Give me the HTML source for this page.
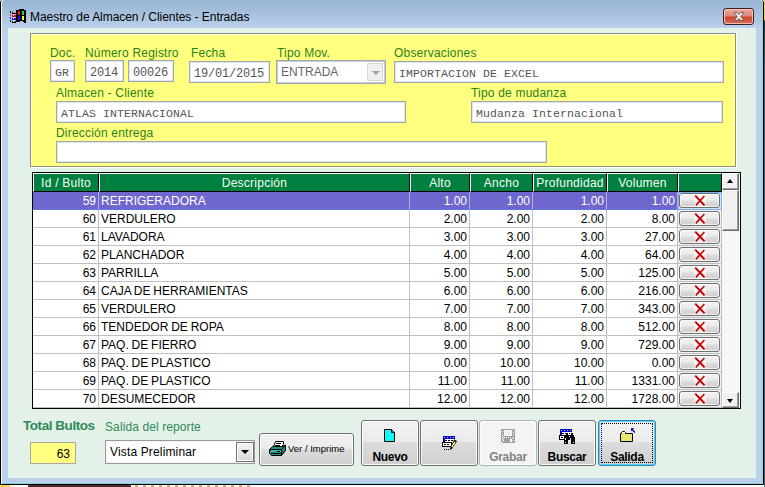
<!DOCTYPE html>
<html>
<head>
<meta charset="utf-8">
<title>Maestro de Almacen / Clientes - Entradas</title>
<style>
*{box-sizing:border-box;margin:0;padding:0}
html,body{width:765px;height:487px;overflow:hidden;background:#fff}
body{position:relative;font-family:"Liberation Sans",sans-serif;font-size:12px;color:#000}
.abs{position:absolute}
#win{left:0;top:-2px;width:764px;height:487px;background:#b9d1ea;border:1px solid #000;border-radius:5px 5px 0 0;overflow:hidden}
#titlebar{left:0;top:1px;width:762px;height:28px;background:linear-gradient(#98b3d1 0%,#a8c2de 50%,#b9d1ea 100%)}
#hl{left:0;top:0;width:762px;height:485px;border:1px solid;border-color:#fff #9fd0e0 #8fcad8 #fff;border-radius:4px 4px 0 0}
#title{left:30px;top:9px;font-size:12px;line-height:16px;white-space:nowrap;color:#000;letter-spacing:-.05px}
#client{left:7px;top:27px;width:748px;height:450px;background:#e4f1e9}
/* yellow panel */
#panel{left:30px;top:33px;width:706px;height:134px;background:#ffff80;border:1px solid #90907c;box-shadow:1px 1px 0 #fff,inset 1px 1px 0 #fffff0}
.lbl{color:#2a8418;font-size:12px;line-height:14px;white-space:nowrap;letter-spacing:.2px}
.inp{background:#fff;border:1px solid #a3a9a6;box-shadow:inset 0 0 0 1px #dde5f5;font-family:"Liberation Mono",monospace;font-size:11.5px;color:#555;white-space:nowrap;overflow:hidden}
.inp span{position:absolute;left:4px;top:5px;line-height:14px;letter-spacing:.1px}
.inp span.n{font-size:12px;letter-spacing:-.2px}
.combo{background:#fff;border:1px solid #a0a8b0;box-shadow:inset 0 0 0 1px #c4cee0}
.combo .ct{position:absolute;left:4px;top:4px;line-height:14px;color:#666;font-size:12px}
.combo .cb{position:absolute;right:2px;top:2px;width:16px;height:18px;background:#efefef;border:1px solid #d8d8d8}
.combo .cb:after{content:"";position:absolute;left:4px;top:7px;border:4px solid transparent;border-top:4px solid #a0a0a0;border-bottom:0}
#close{left:723px;top:8px;width:31px;height:17px;border:1px solid #3c1c28;border-radius:3px;background:linear-gradient(#eaa898 0%,#dc8878 48%,#c8452c 52%,#dc6a58 100%);box-shadow:inset 0 0 0 1px rgba(255,210,200,.8)}
.btn{border:1px solid #707070;border-radius:3px;background:linear-gradient(#f2f2f2 0%,#ebebeb 47%,#dddddd 48%,#cfcfcf 100%);box-shadow:inset 0 0 0 1px rgba(255,255,255,.85)}
.btn b{position:absolute;left:0;right:0;top:29px;text-align:center;font-size:12px;line-height:14px;letter-spacing:-.3px}
.btn.dis{border-color:#adb2b5;background:#f4f4f4}
.btn.dis b{color:#838383}
.btn.foc{border-color:#3c7fb1;box-shadow:inset 0 0 0 1px #48d8fb}
.btn .dots{position:absolute;left:2px;top:2px;right:2px;bottom:2px;border:1px dotted #000}
/* grid */
#grid{left:32px;top:172px;width:709px;height:237px;background:#fff;border:1px solid #000;overflow:hidden}
.hc{position:absolute;top:0;height:19px;background:#008040;border-left:1px solid #fff;border-top:1px solid #fff;border-right:1px solid #000;border-bottom:1px solid #000;color:#f4fff0;text-align:center;line-height:18px;font-size:12px;white-space:nowrap;overflow:hidden;letter-spacing:.25px}
.row{position:absolute;left:0;width:689px;height:18px}
.row.sel .c{background:#6f67cd;color:#fff;border-right-color:#b4ace6;border-bottom-color:#5a78e0}
.c{position:absolute;top:0;height:18px;border-right:1px solid #c0c0c0;border-bottom:1px solid #c0c0c0;line-height:19px;font-size:12px;white-space:nowrap;overflow:hidden;padding:0 2px 0 2px;letter-spacing:0;word-spacing:-.5px}
.c.r{text-align:right;padding-right:2px}
.c.b{padding:0;background:#f0f0f0}
.row.sel .c.b{background:#cfe4fa;border:1px solid #7ab0f0}
.row.sel .c.b .xb{left:0;top:0}
.xb{position:absolute;left:1px;top:1px;width:41px;height:15px;border:1px solid #707070;border-radius:3px;background:linear-gradient(#f2f2f2 0%,#ebebeb 48%,#dddddd 52%,#cfcfcf 100%);box-shadow:inset 0 0 0 1px rgba(255,255,255,.7)}
.xb svg{position:absolute;left:14px;top:0}
#sb{position:absolute;left:689px;top:0;width:17px;height:235px;background:#f8f8f8;background-image:repeating-conic-gradient(#fff 0 25%,#f0f0f0 0 50%);background-size:2px 2px}
.sbtn{position:absolute;left:0;width:17px;height:17px;background:#f0f0f0;border:1px solid;border-color:#fff #696969 #696969 #fff;box-shadow:inset -1px -1px 0 #a0a0a0}
.thumb{position:absolute;left:0;top:17px;width:17px;height:41px;background:#f0f0f0;border:1px solid;border-color:#fff #696969 #696969 #fff;box-shadow:inset -1px -1px 0 #a0a0a0}
.sbtn i{position:absolute;left:4px;border:3.5px solid transparent;border-top-width:4px;border-bottom-width:4px}
.sbtn i.up{top:1px;border-bottom:4px solid #000}
.sbtn i.dn{top:6px;border-top:4px solid #000}
</style>
</head>
<body>
<div class="abs" style="left:764px;top:0;width:1px;height:487px;background:linear-gradient(#f0d040 0,#f0d040 20px,#1c4038 21px,#445a60 60px,#445a60 100%)"></div>
<div class="abs" style="left:0;top:485px;width:10px;height:2px;background:#f0d848"></div>
<div class="abs" style="left:28px;top:485px;width:103px;height:2px;background:#4a2830"></div>
<div class="abs" style="left:135px;top:485px;width:120px;height:2px;background:repeating-linear-gradient(90deg,#e8a860 0,#e8a860 3px,#fff 3px,#fff 8px)"></div>
<div id="win" class="abs">
  <div id="titlebar" class="abs"></div>
  <div id="hl" class="abs"></div>
</div>
<div id="title" class="abs">Maestro de Almacen / Clientes - Entradas</div>
<div id="client" class="abs" style="left:8px;top:28px"></div>
<div id="panel" class="abs"></div>
<!-- form labels -->
<div class="abs lbl" style="left:50px;top:46px">Doc.</div>
<div class="abs lbl" style="left:85px;top:46px">Número Registro</div>
<div class="abs lbl" style="left:191px;top:46px">Fecha</div>
<div class="abs lbl" style="left:277px;top:46px">Tipo Mov.</div>
<div class="abs lbl" style="left:394px;top:46px">Observaciones</div>
<div class="abs lbl" style="left:56px;top:86px">Almacen - Cliente</div>
<div class="abs lbl" style="left:471px;top:86px">Tipo de mudanza</div>
<div class="abs lbl" style="left:56px;top:126px">Dirección entrega</div>
<!-- inputs -->
<div class="abs inp" style="left:50px;top:60px;width:25px;height:22px"><span>GR</span></div>
<div class="abs inp" style="left:85px;top:60px;width:39px;height:22px"><span class="n">2014</span></div>
<div class="abs inp" style="left:128px;top:60px;width:46px;height:22px"><span class="n">00026</span></div>
<div class="abs inp" style="left:189px;top:61px;width:81px;height:22px"><span class="n">19/01/2015</span></div>
<div class="abs combo" style="left:276px;top:60px;width:110px;height:24px"><span class="ct">ENTRADA</span><span class="cb"></span></div>
<div class="abs inp" style="left:394px;top:61px;width:330px;height:22px"><span>IMPORTACION DE EXCEL</span></div>
<div class="abs inp" style="left:56px;top:101px;width:350px;height:22px"><span>ATLAS INTERNACIONAL</span></div>
<div class="abs inp" style="left:471px;top:101px;width:252px;height:22px"><span>Mudanza Internacional</span></div>
<div class="abs inp" style="left:56px;top:141px;width:491px;height:22px"></div>
<div id="grid" class="abs">
<div class="hc" style="left:0px;width:66px">Id / Bulto</div>
<div class="hc" style="left:66px;width:311px">Descripción</div>
<div class="hc" style="left:377px;width:60px">Alto</div>
<div class="hc" style="left:437px;width:63px">Ancho</div>
<div class="hc" style="left:500px;width:74px">Profundidad</div>
<div class="hc" style="left:574px;width:71px">Volumen</div>
<div class="hc" style="left:645px;width:44px"></div>
<div class="row sel" style="top:19px">
<div class="c r" style="left:0px;width:66px">59</div>
<div class="c" style="left:66px;width:311px">REFRIGERADORA</div>
<div class="c r" style="left:377px;width:60px">1.00</div>
<div class="c r" style="left:437px;width:63px">1.00</div>
<div class="c r" style="left:500px;width:74px">1.00</div>
<div class="c r" style="left:574px;width:71px">1.00</div>
<div class="c b" style="left:645px;width:44px"><div class="xb"><svg width="12" height="13" viewBox="0 0 12 13"><rect width="12" height="13" fill="#fff" fill-opacity=".5"/><path d="M1.2 1.6L10.6 11.4" stroke="#c00000" stroke-width="2" fill="none"/><path d="M10.4 2L1.8 11.4" stroke="#c80808" stroke-width="1.7" fill="none"/></svg></div></div>
</div>
<div class="row" style="top:37px">
<div class="c r" style="left:0px;width:66px">60</div>
<div class="c" style="left:66px;width:311px">VERDULERO</div>
<div class="c r" style="left:377px;width:60px">2.00</div>
<div class="c r" style="left:437px;width:63px">2.00</div>
<div class="c r" style="left:500px;width:74px">2.00</div>
<div class="c r" style="left:574px;width:71px">8.00</div>
<div class="c b" style="left:645px;width:44px"><div class="xb"><svg width="12" height="13" viewBox="0 0 12 13"><rect width="12" height="13" fill="#fff" fill-opacity=".5"/><path d="M1.2 1.6L10.6 11.4" stroke="#c00000" stroke-width="2" fill="none"/><path d="M10.4 2L1.8 11.4" stroke="#c80808" stroke-width="1.7" fill="none"/></svg></div></div>
</div>
<div class="row" style="top:55px">
<div class="c r" style="left:0px;width:66px">61</div>
<div class="c" style="left:66px;width:311px">LAVADORA</div>
<div class="c r" style="left:377px;width:60px">3.00</div>
<div class="c r" style="left:437px;width:63px">3.00</div>
<div class="c r" style="left:500px;width:74px">3.00</div>
<div class="c r" style="left:574px;width:71px">27.00</div>
<div class="c b" style="left:645px;width:44px"><div class="xb"><svg width="12" height="13" viewBox="0 0 12 13"><rect width="12" height="13" fill="#fff" fill-opacity=".5"/><path d="M1.2 1.6L10.6 11.4" stroke="#c00000" stroke-width="2" fill="none"/><path d="M10.4 2L1.8 11.4" stroke="#c80808" stroke-width="1.7" fill="none"/></svg></div></div>
</div>
<div class="row" style="top:73px">
<div class="c r" style="left:0px;width:66px">62</div>
<div class="c" style="left:66px;width:311px">PLANCHADOR</div>
<div class="c r" style="left:377px;width:60px">4.00</div>
<div class="c r" style="left:437px;width:63px">4.00</div>
<div class="c r" style="left:500px;width:74px">4.00</div>
<div class="c r" style="left:574px;width:71px">64.00</div>
<div class="c b" style="left:645px;width:44px"><div class="xb"><svg width="12" height="13" viewBox="0 0 12 13"><rect width="12" height="13" fill="#fff" fill-opacity=".5"/><path d="M1.2 1.6L10.6 11.4" stroke="#c00000" stroke-width="2" fill="none"/><path d="M10.4 2L1.8 11.4" stroke="#c80808" stroke-width="1.7" fill="none"/></svg></div></div>
</div>
<div class="row" style="top:91px">
<div class="c r" style="left:0px;width:66px">63</div>
<div class="c" style="left:66px;width:311px">PARRILLA</div>
<div class="c r" style="left:377px;width:60px">5.00</div>
<div class="c r" style="left:437px;width:63px">5.00</div>
<div class="c r" style="left:500px;width:74px">5.00</div>
<div class="c r" style="left:574px;width:71px">125.00</div>
<div class="c b" style="left:645px;width:44px"><div class="xb"><svg width="12" height="13" viewBox="0 0 12 13"><rect width="12" height="13" fill="#fff" fill-opacity=".5"/><path d="M1.2 1.6L10.6 11.4" stroke="#c00000" stroke-width="2" fill="none"/><path d="M10.4 2L1.8 11.4" stroke="#c80808" stroke-width="1.7" fill="none"/></svg></div></div>
</div>
<div class="row" style="top:109px">
<div class="c r" style="left:0px;width:66px">64</div>
<div class="c" style="left:66px;width:311px">CAJA DE HERRAMIENTAS</div>
<div class="c r" style="left:377px;width:60px">6.00</div>
<div class="c r" style="left:437px;width:63px">6.00</div>
<div class="c r" style="left:500px;width:74px">6.00</div>
<div class="c r" style="left:574px;width:71px">216.00</div>
<div class="c b" style="left:645px;width:44px"><div class="xb"><svg width="12" height="13" viewBox="0 0 12 13"><rect width="12" height="13" fill="#fff" fill-opacity=".5"/><path d="M1.2 1.6L10.6 11.4" stroke="#c00000" stroke-width="2" fill="none"/><path d="M10.4 2L1.8 11.4" stroke="#c80808" stroke-width="1.7" fill="none"/></svg></div></div>
</div>
<div class="row" style="top:127px">
<div class="c r" style="left:0px;width:66px">65</div>
<div class="c" style="left:66px;width:311px">VERDULERO</div>
<div class="c r" style="left:377px;width:60px">7.00</div>
<div class="c r" style="left:437px;width:63px">7.00</div>
<div class="c r" style="left:500px;width:74px">7.00</div>
<div class="c r" style="left:574px;width:71px">343.00</div>
<div class="c b" style="left:645px;width:44px"><div class="xb"><svg width="12" height="13" viewBox="0 0 12 13"><rect width="12" height="13" fill="#fff" fill-opacity=".5"/><path d="M1.2 1.6L10.6 11.4" stroke="#c00000" stroke-width="2" fill="none"/><path d="M10.4 2L1.8 11.4" stroke="#c80808" stroke-width="1.7" fill="none"/></svg></div></div>
</div>
<div class="row" style="top:145px">
<div class="c r" style="left:0px;width:66px">66</div>
<div class="c" style="left:66px;width:311px">TENDEDOR DE ROPA</div>
<div class="c r" style="left:377px;width:60px">8.00</div>
<div class="c r" style="left:437px;width:63px">8.00</div>
<div class="c r" style="left:500px;width:74px">8.00</div>
<div class="c r" style="left:574px;width:71px">512.00</div>
<div class="c b" style="left:645px;width:44px"><div class="xb"><svg width="12" height="13" viewBox="0 0 12 13"><rect width="12" height="13" fill="#fff" fill-opacity=".5"/><path d="M1.2 1.6L10.6 11.4" stroke="#c00000" stroke-width="2" fill="none"/><path d="M10.4 2L1.8 11.4" stroke="#c80808" stroke-width="1.7" fill="none"/></svg></div></div>
</div>
<div class="row" style="top:163px">
<div class="c r" style="left:0px;width:66px">67</div>
<div class="c" style="left:66px;width:311px">PAQ. DE FIERRO</div>
<div class="c r" style="left:377px;width:60px">9.00</div>
<div class="c r" style="left:437px;width:63px">9.00</div>
<div class="c r" style="left:500px;width:74px">9.00</div>
<div class="c r" style="left:574px;width:71px">729.00</div>
<div class="c b" style="left:645px;width:44px"><div class="xb"><svg width="12" height="13" viewBox="0 0 12 13"><rect width="12" height="13" fill="#fff" fill-opacity=".5"/><path d="M1.2 1.6L10.6 11.4" stroke="#c00000" stroke-width="2" fill="none"/><path d="M10.4 2L1.8 11.4" stroke="#c80808" stroke-width="1.7" fill="none"/></svg></div></div>
</div>
<div class="row" style="top:181px">
<div class="c r" style="left:0px;width:66px">68</div>
<div class="c" style="left:66px;width:311px">PAQ. DE PLASTICO</div>
<div class="c r" style="left:377px;width:60px">0.00</div>
<div class="c r" style="left:437px;width:63px">10.00</div>
<div class="c r" style="left:500px;width:74px">10.00</div>
<div class="c r" style="left:574px;width:71px">0.00</div>
<div class="c b" style="left:645px;width:44px"><div class="xb"><svg width="12" height="13" viewBox="0 0 12 13"><rect width="12" height="13" fill="#fff" fill-opacity=".5"/><path d="M1.2 1.6L10.6 11.4" stroke="#c00000" stroke-width="2" fill="none"/><path d="M10.4 2L1.8 11.4" stroke="#c80808" stroke-width="1.7" fill="none"/></svg></div></div>
</div>
<div class="row" style="top:199px">
<div class="c r" style="left:0px;width:66px">69</div>
<div class="c" style="left:66px;width:311px">PAQ. DE PLASTICO</div>
<div class="c r" style="left:377px;width:60px">11.00</div>
<div class="c r" style="left:437px;width:63px">11.00</div>
<div class="c r" style="left:500px;width:74px">11.00</div>
<div class="c r" style="left:574px;width:71px">1331.00</div>
<div class="c b" style="left:645px;width:44px"><div class="xb"><svg width="12" height="13" viewBox="0 0 12 13"><rect width="12" height="13" fill="#fff" fill-opacity=".5"/><path d="M1.2 1.6L10.6 11.4" stroke="#c00000" stroke-width="2" fill="none"/><path d="M10.4 2L1.8 11.4" stroke="#c80808" stroke-width="1.7" fill="none"/></svg></div></div>
</div>
<div class="row" style="top:217px">
<div class="c r" style="left:0px;width:66px">70</div>
<div class="c" style="left:66px;width:311px">DESUMECEDOR</div>
<div class="c r" style="left:377px;width:60px">12.00</div>
<div class="c r" style="left:437px;width:63px">12.00</div>
<div class="c r" style="left:500px;width:74px">12.00</div>
<div class="c r" style="left:574px;width:71px">1728.00</div>
<div class="c b" style="left:645px;width:44px"><div class="xb"><svg width="12" height="13" viewBox="0 0 12 13"><rect width="12" height="13" fill="#fff" fill-opacity=".5"/><path d="M1.2 1.6L10.6 11.4" stroke="#c00000" stroke-width="2" fill="none"/><path d="M10.4 2L1.8 11.4" stroke="#c80808" stroke-width="1.7" fill="none"/></svg></div></div>
</div>
<div id="sb"><div class="sbtn" style="top:0"><i class="up"></i></div><div class="thumb"></div><div class="sbtn" style="bottom:0;height:16px"><i class="dn"></i></div></div>
</div>
<!-- title icon -->
<svg class="abs" style="left:10px;top:9px" width="16" height="14" viewBox="0 0 16 14" shape-rendering="crispEdges"><path d="M6 1h3v-1h5v1h2v13h-2v-1h-1v-1h-3v1h-4z" fill="#000"/><rect x="8" y="2" width="2" height="4" fill="#e42020"/><rect x="12" y="2" width="2" height="4" fill="#28d848"/><rect x="8" y="7" width="2" height="4" fill="#1c1cc0"/><rect x="12" y="7" width="2" height="4" fill="#f0f050"/><rect x="0" y="2" width="1" height="2" fill="#000"/><rect x="0" y="5" width="1" height="2" fill="#b04868"/><rect x="0" y="8" width="1" height="2" fill="#2040c8"/><rect x="0" y="11" width="1" height="2" fill="#000"/><rect x="2" y="3" width="1" height="2" fill="#000"/><rect x="3" y="4" width="3" height="1" fill="#000"/><rect x="2" y="5" width="4" height="1" fill="#f0a0b0"/><rect x="2" y="6" width="4" height="2" fill="#b01838"/><rect x="3" y="6" width="1" height="1" fill="#f0a0b0"/><rect x="2" y="8" width="4" height="1" fill="#f0b8d0"/><rect x="2" y="9" width="4" height="2" fill="#1818c8"/><rect x="3" y="9" width="1" height="1" fill="#a0b0f0"/><rect x="2" y="12" width="4" height="2" fill="#000"/><rect x="3" y="12" width="2" height="1" fill="#b8cce4"/></svg>
<!-- close button -->
<div id="close" class="abs"><svg width="12" height="9" viewBox="0 0 11 9" preserveAspectRatio="none" style="position:absolute;left:9px;top:3px"><path d="M1 0.5h2.6L5.5 2.6 7.4 0.5H10L6.9 4.5 10 8.5H7.4L5.5 6.4 3.6 8.5H1L4.1 4.5z" fill="#fff" stroke="#6a5a60" stroke-width="0.9"/></svg></div>
<!-- bottom controls -->
<div class="abs" style="left:23px;top:418px;font-weight:bold;font-size:13.5px;line-height:16px;color:#2e8b57;white-space:nowrap;letter-spacing:-.45px">Total Bultos</div>
<div class="abs" style="left:105px;top:420px;font-size:12px;line-height:14px;color:#2e8b57;white-space:nowrap;letter-spacing:.1px">Salida del reporte</div>
<div class="abs" style="left:30px;top:442px;width:46px;height:22px;background:#ffff80;border:1px solid #a8a8a8;text-align:right;padding-right:5px;line-height:22px;font-size:12px">63</div>
<div class="abs" style="left:105px;top:440px;width:150px;height:24px;background:#fff;border:1px solid #9a9a9a;box-shadow:inset 0 0 0 1px #f4f4f4">
  <span style="position:absolute;left:4px;top:4px;line-height:14px;font-size:12px;letter-spacing:.15px;white-space:nowrap">Vista Preliminar</span>
  <span style="position:absolute;left:130px;top:1px;width:18px;height:20px;border:1px solid #707070;background:linear-gradient(#f4f4f4,#d8d8d8);box-shadow:inset 0 0 0 1px #fff"></span>
  <span style="position:absolute;left:135px;top:9px;border:4px solid transparent;border-top:4px solid #000;border-bottom:0"></span>
</div>
<div class="abs btn" style="left:259px;top:433px;width:95px;height:33px"><span style="position:absolute;left:28px;top:9px;font-size:9.5px;line-height:12px;white-space:nowrap">Ver / Imprime</span></div>
<div class="abs btn" style="left:361px;top:420px;width:58px;height:46px"><b>Nuevo</b></div>
<div class="abs btn" style="left:420px;top:420px;width:58px;height:46px"></div>
<div class="abs btn dis" style="left:479px;top:420px;width:58px;height:46px"><b>Grabar</b></div>
<div class="abs btn" style="left:538px;top:420px;width:58px;height:46px"><b>Buscar</b></div>
<div class="abs btn foc" style="left:598px;top:420px;width:58px;height:46px"><b>Salida</b><i class="dots"></i></div>
<svg class="abs" style="left:384px;top:429px" width="11" height="13" viewBox="0 0 11 13"><path d="M0.5 0.5H7.5L10.5 3.5V12.5H0.5Z" fill="#10f8f8" stroke="#000" stroke-width="1"/><path d="M7.5 0.5V3.5H10.5" fill="none" stroke="#000" stroke-width="1"/></svg>
<svg class="abs" style="left:442px;top:436px" width="16" height="15" viewBox="0 0 16 15"><g shape-rendering="crispEdges"><rect x="1" y="0" width="12" height="3" fill="#0000c0"/><rect x="2" y="1" width="1" height="1" fill="#c8c8ff"/><rect x="5" y="1" width="1" height="1" fill="#c8c8ff"/><rect x="8" y="1" width="1" height="1" fill="#c8c8ff"/><rect x="11" y="1" width="1" height="1" fill="#c8c8ff"/><rect x="1" y="3" width="2" height="3" fill="#0000c0"/><rect x="3" y="3" width="9" height="3" fill="#fff"/><rect x="3" y="4" width="2" height="1" fill="#000"/><rect x="6" y="4" width="2" height="1" fill="#000"/><rect x="9" y="4" width="2" height="1" fill="#000"/><rect x="0" y="6" width="10" height="5" fill="#000"/><rect x="1" y="7" width="8" height="3" fill="#fff"/><rect x="2" y="8" width="2" height="1" fill="#000"/><rect x="5" y="8" width="2" height="1" fill="#000"/><rect x="2" y="13" width="1" height="1" fill="#000"/><rect x="4" y="13" width="1" height="1" fill="#000"/><rect x="6" y="13" width="1" height="1" fill="#000"/></g><path d="M12.3 3.2L15 5.2L10.3 12.2L8.2 14.2L8.4 11Z" fill="#000"/><path d="M12.2 5.6L13.6 6.6L10.2 11.4L9.2 10.6Z" fill="#f4f080"/><path d="M12.6 4.2L14.2 5.4L13.8 6.2L12.2 5Z" fill="#902030"/></svg>
<svg class="abs" style="left:501px;top:429px" width="14" height="14" viewBox="0 0 14 14" shape-rendering="crispEdges"><rect x="0" y="0" width="14" height="14" fill="#a0a0a0"/><rect x="3" y="1" width="8" height="6" fill="#f8f8f8"/><rect x="4" y="2" width="6" height="4" fill="#ececec"/><rect x="1" y="2" width="1" height="1" fill="#fff"/><rect x="1" y="4" width="1" height="1" fill="#fff"/><rect x="1" y="6" width="1" height="1" fill="#fff"/><rect x="1" y="8" width="1" height="1" fill="#fff"/><rect x="1" y="10" width="1" height="1" fill="#fff"/><rect x="1" y="12" width="1" height="1" fill="#fff"/><rect x="12" y="1" width="1" height="1" fill="#fff"/><rect x="12" y="3" width="1" height="1" fill="#fff"/><rect x="12" y="5" width="1" height="1" fill="#fff"/><rect x="12" y="9" width="1" height="1" fill="#fff"/><rect x="12" y="11" width="1" height="1" fill="#fff"/><rect x="5" y="8" width="1" height="1" fill="#fff"/><rect x="7" y="8" width="1" height="1" fill="#fff"/><rect x="9" y="8" width="1" height="1" fill="#fff"/><rect x="2" y="7" width="1" height="1" fill="#fff"/><rect x="2" y="9" width="1" height="1" fill="#fff"/><rect x="3" y="8" width="1" height="1" fill="#fff"/><rect x="11" y="8" width="1" height="1" fill="#fff"/><rect x="2" y="11" width="1" height="1" fill="#fff"/><rect x="9" y="10" width="2" height="3" fill="#fff"/><rect x="0" y="13" width="1" height="1" fill="#f4f4f4"/></svg>
<svg class="abs" style="left:559px;top:429px" width="16" height="15" viewBox="0 0 16 15" shape-rendering="crispEdges"><rect x="1" y="0" width="12" height="3" fill="#0000c0"/><rect x="2" y="1" width="1" height="1" fill="#c8c8ff"/><rect x="5" y="1" width="1" height="1" fill="#c8c8ff"/><rect x="8" y="1" width="1" height="1" fill="#c8c8ff"/><rect x="11" y="1" width="1" height="1" fill="#c8c8ff"/><rect x="1" y="3" width="2" height="3" fill="#0000c0"/><rect x="3" y="3" width="9" height="3" fill="#fff"/><rect x="3" y="4" width="2" height="1" fill="#000"/><rect x="6" y="4" width="2" height="1" fill="#000"/><rect x="10" y="4" width="1" height="1" fill="#000"/><rect x="0" y="6" width="6" height="5" fill="#000"/><rect x="1" y="7" width="4" height="3" fill="#fff"/><rect x="2" y="8" width="2" height="1" fill="#000"/><rect x="7" y="4" width="2" height="3" fill="#000"/><rect x="12" y="4" width="2" height="3" fill="#000"/><rect x="6" y="6" width="9" height="5" fill="#000"/><rect x="5" y="8" width="4" height="7" fill="#000"/><rect x="12" y="8" width="4" height="7" fill="#000"/><rect x="10" y="7" width="1" height="1" fill="#fff"/><rect x="6" y="9" width="1" height="2" fill="#e0e0e0"/><rect x="11" y="9" width="1" height="2" fill="#e0e0e0"/><rect x="6" y="13" width="1" height="1" fill="#fff"/><rect x="14" y="13" width="1" height="1" fill="#fff"/></svg>
<svg class="abs" style="left:620px;top:428px" width="16" height="14" viewBox="0 0 16 14"><path d="M0.5 5.5H1.5V4.5L2.5 3.5H4.5L5.5 4.5V5.5H12.5V13.5H0.5Z" fill="#e8e870" stroke="#000" stroke-width="1"/><rect x="2" y="4" width="3" height="1" fill="#fff"/><path d="M11 0H14V1H13V2H14V3H15V5H14V4H13V3H12V2H11Z" fill="#1414c8" shape-rendering="crispEdges"/><path d="M11 0h1v3h-1z" fill="#1414c8"/></svg>
<svg class="abs" style="left:269px;top:441px" width="17" height="15" viewBox="0 0 17 15"><path d="M6.5 0.5H14.5V3.5L12.5 5.5H4.5Z" fill="#fff" stroke="#000" stroke-width="1"/><rect x="7" y="2" width="5" height="1" fill="#000"/><rect x="6" y="4" width="5" height="1" fill="#000"/><path d="M3.5 5.5H13L16.5 4V9.5L12.5 14.5H2.5L0.5 12.5V8.5Z" fill="#1f8f84" stroke="#000" stroke-width="1"/><path d="M1 8.5H12.5L16 4.5" fill="none" stroke="#000" stroke-width="1"/><rect x="2" y="9" width="10" height="2" fill="#38b0a4"/><rect x="8" y="10" width="3" height="1" fill="#000"/><rect x="2" y="12" width="10" height="1" fill="#000"/><path d="M12.5 8.5V14.5" stroke="#000" stroke-width="1"/><path d="M13.5 8L15.5 5.5M13.5 11L16 8M13.5 13L16 10" stroke="#000" stroke-width=".7" stroke-dasharray="1 1"/></svg>
</body>
</html>
